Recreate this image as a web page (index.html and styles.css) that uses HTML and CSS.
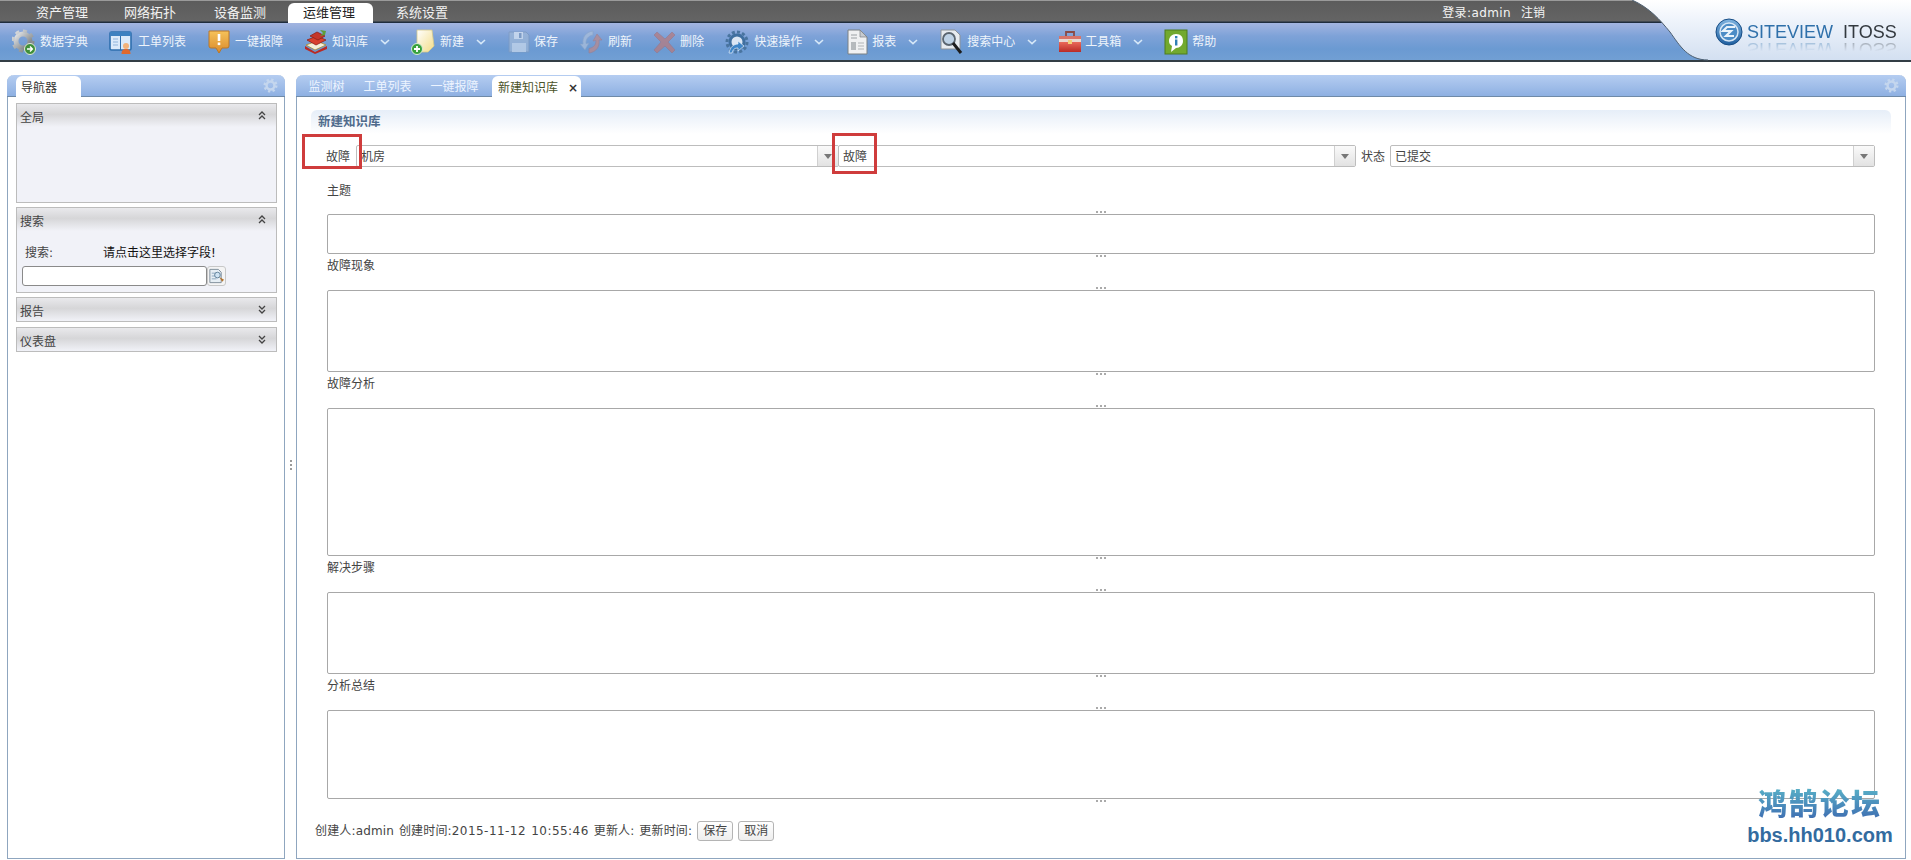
FILE: index.html
```html
<!DOCTYPE html>
<html lang="zh-CN">
<head>
<meta charset="utf-8">
<title>新建知识库</title>
<link rel="stylesheet" href="styles.css">
</head>
<body>
<svg class="defs" width="0" height="0" aria-hidden="true">
  <defs>
    <linearGradient id="gSteel" x1="0" y1="0" x2="1" y2="1"><stop offset="0" stop-color="#e2e4e6"/><stop offset="1" stop-color="#6e7478"/></linearGradient>
    <linearGradient id="gOrange" x1="0" y1="0" x2="0" y2="1"><stop offset="0" stop-color="#f6c25a"/><stop offset="1" stop-color="#d98a2a"/></linearGradient>
    <linearGradient id="gNote" x1="0" y1="0" x2="1" y2="1"><stop offset="0" stop-color="#fff"/><stop offset="1" stop-color="#f3dc86"/></linearGradient>
    <linearGradient id="gRed" x1="0" y1="0" x2="0" y2="1"><stop offset="0" stop-color="#ea6a5a"/><stop offset="1" stop-color="#b92a25"/></linearGradient>
    <linearGradient id="gLogo" x1="0" y1="0" x2="0" y2="1"><stop offset="0" stop-color="#ffffff"/><stop offset=".35" stop-color="#eef3fb"/><stop offset="1" stop-color="#d3e0f1"/></linearGradient>
    <linearGradient id="gBall" x1="0" y1="0" x2="0" y2="1"><stop offset="0" stop-color="#7fb4e0"/><stop offset="1" stop-color="#1f5f9f"/></linearGradient>
    <symbol id="gear" viewBox="0 0 16 16">
      <circle cx="8" cy="8" r="4.2" fill="none" stroke="currentColor" stroke-width="2.6"/>
      <circle cx="8" cy="8" r="6.2" fill="none" stroke="currentColor" stroke-width="2.6" stroke-dasharray="2.4 2.47"/>
    </symbol>
    <symbol id="chev" viewBox="0 0 10 6"><path d="M1 1l4 3.6L9 1" fill="none" stroke="#d6e8f8" stroke-width="1.6"/></symbol>
    <symbol id="up2" viewBox="0 0 8 9"><path d="M1 4l3-3 3 3M1 8l3-3 3 3" fill="none" stroke="#444" stroke-width="1.3"/></symbol>
    <symbol id="down2" viewBox="0 0 8 9"><path d="M1 1l3 3 3-3M1 5l3 3 3-3" fill="none" stroke="#444" stroke-width="1.3"/></symbol>
  </defs>
</svg>

<header class="app-header">
  <div class="topbar">
    <nav class="nav">
      <a class="nav-item">资产管理</a>
      <a class="nav-item">网络拓扑</a>
      <a class="nav-item nav-third">设备监测</a>
      <a class="nav-item nav-active">运维管理</a>
      <a class="nav-item nav-last">系统设置</a>
    </nav>
    <div class="userbar"><span class="user-name">登录:admin</span><span>注销</span></div>
  </div>
  <div class="toolbar">
    <div class="tool"><svg class="ti s28" viewBox="0 0 24 26"><circle cx="11" cy="12" r="7" fill="none" stroke="url(#gSteel)" stroke-width="5"/><circle cx="11" cy="12" r="10" fill="none" stroke="url(#gSteel)" stroke-width="3" stroke-dasharray="4 3.8"/><circle cx="18" cy="20" r="5.5" fill="#3f8f3a" stroke="#dfe9d8"/><path d="M15 20h5m-2-2.4 2.4 2.4-2.4 2.4" fill="none" stroke="#fff" stroke-width="1.4"/></svg><span>数据字典</span></div>
    <div class="tool"><svg class="ti s29" viewBox="0 0 24 26"><rect x="1" y="3" width="21" height="18" rx="1.5" fill="#dceafa" stroke="#2f6fae" stroke-width="1.6"/><rect x="1" y="3" width="21" height="4" fill="#3d80c0"/><path d="M11.5 7v14" stroke="#2f6fae"/><path d="M4 10h5M4 13h5M4 16h5" stroke="#a9c6e6" stroke-width="1.4"/><circle cx="17" cy="17" r="3" fill="#f3b27a"/><path d="M12.5 25c0-4 2-5 4.500-5s4.500 1 4.500 5z" fill="#e0682c"/></svg><span>工单列表</span></div>
    <div class="tool"><svg class="ti s28" viewBox="0 0 24 26"><path d="M2 2h20v15a2 2 0 0 1-2 2h-5l-3 5-3-5H4a2 2 0 0 1-2-2z" fill="url(#gOrange)" stroke="#b9772a"/><rect x="10.700" y="5" width="2.600" height="7" fill="#fff"/><rect x="10.700" y="13.500" width="2.600" height="2.600" fill="#fff"/></svg><span>一键报障</span></div>
    <div class="tool"><svg class="ti s28" viewBox="0 0 24 26"><path d="M1 17l10 6 12-6v3l-12 5-10-5z" fill="#b92a25"/><path d="M2 16l9 5 11-5-9-4z" fill="#f4efd9" stroke="#a9862f" stroke-width=".8"/><path d="M3 11l9 5 10-5-9-4z" fill="#d8402e" stroke="#8e2019" stroke-width=".8"/><path d="M6 7l8 4 7-4-8-4z" fill="#c5352a" stroke="#8e2019" stroke-width=".8"/><path d="M16 1l3 3-3 3 5-1 1-4z" fill="#5e9e3a"/></svg><span>知识库</span><svg class="chev"><use href="#chev"/></svg></div>
    <div class="tool"><svg class="ti s29" viewBox="0 0 24 26"><path d="M6 1h15l2 16-6 6H6z" fill="url(#gNote)" stroke="#d6c98a" stroke-width=".8"/><circle cx="6" cy="20" r="5.500" fill="#37a13c" stroke="#d9edd5"/><path d="M6 17v6M3 20h6" stroke="#fff" stroke-width="1.800"/></svg><span>新建</span><svg class="chev"><use href="#chev"/></svg></div>
    <div class="tool"><svg class="ti s27 off" viewBox="0 0 24 26"><path d="M2 3h17l3 3v17H2z" fill="#9db7d8" stroke="#7c99c0"/><rect x="7" y="3" width="9" height="7" fill="#d8e4f3"/><rect x="12" y="4" width="2.500" height="5" fill="#7c99c0"/><rect x="5" y="14" width="14" height="9" fill="#c8d8ec"/></svg><span>保存</span></div>
    <div class="tool"><svg class="ti s29 off" viewBox="0 0 24 26"><path d="M14 2C7 3 3 8 4 15l-3 0 5 6 4-7-3 .5C7 10 9 7 14 6z" fill="#a9bedb" stroke="#8aa3c6" stroke-width=".7"/><path d="M10 24c7-1 11-6 10-13l3 0-5-6-4 7 3-.5c0 4-2 7-7 8z" fill="#b98a8e" stroke="#a17a86" stroke-width=".7"/></svg><span>刷新</span></div>
    <div class="tool"><svg class="ti s27 off" viewBox="0 0 24 26"><path d="M4 3l8 7 7-7 3 3-7 7 7 8-3 3-7-7-8 7-3-3 7-8-7-7z" fill="#b57b80" stroke="#9b7080" stroke-width=".7"/></svg><span>删除</span></div>
    <div class="tool"><svg class="ti s29" viewBox="0 0 24 26"><circle cx="12" cy="13" r="7" fill="#dbe6f3" stroke="#3f6f9f" stroke-width="3"/><circle cx="12" cy="13" r="10" fill="none" stroke="#49749f" stroke-width="3" stroke-dasharray="3 2.200"/><path d="M4 24c1-6 5-9 9-9V12l6 5-6 5v-3c-3 0-5 1-6 5z" fill="#3f86c8" stroke="#e4eef8" stroke-width=".7"/></svg><span>快速操作</span><svg class="chev"><use href="#chev"/></svg></div>
    <div class="tool"><svg class="ti s27" viewBox="0 0 24 26"><path d="M3 1h12l7 7v17H3z" fill="#f0f1f2" stroke="#7b8084"/><path d="M15 1v7h7z" fill="#c7cbcf" stroke="#7b8084" stroke-width=".7"/><path d="M6 6h6M6 9h6" stroke="#9ba0a4"/><rect x="6" y="13" width="5" height="8" fill="#b6babd"/><path d="M13 14h6M13 17h6M13 20h6" stroke="#b0b4b7"/></svg><span>报表</span><svg class="chev"><use href="#chev"/></svg></div>
    <div class="tool"><svg class="ti s28" viewBox="0 0 24 26"><path d="M2 1h14l5 5v14H2z" fill="#e8ecf0" stroke="#8d9398"/><circle cx="10" cy="10" r="6" fill="#bfd3e6" stroke="#5b6670" stroke-width="1.800"/><path d="M14 14l8 10" stroke="#1d1d1d" stroke-width="3"/></svg><span>搜索中心</span><svg class="chev"><use href="#chev"/></svg></div>
    <div class="tool"><svg class="ti s27" viewBox="0 0 24 26"><path d="M8 7V3h8v4" fill="none" stroke="#8a4a45" stroke-width="1.800"/><rect x="1" y="7" width="22" height="8" fill="#ead9d2"/><rect x="1" y="13" width="22" height="10" fill="url(#gRed)"/><rect x="1" y="7" width="22" height="3" fill="#d7746a"/><rect x="10" y="11" width="4" height="4" fill="#f1d27a"/></svg><span>工具箱</span><svg class="chev"><use href="#chev"/></svg></div>
    <div class="tool"><svg class="ti s28" viewBox="0 0 24 26"><rect x="1" y="1" width="22" height="24" fill="#72a92f" stroke="#4d7d1e"/><path d="M12 5c5 0 7 3 7 7s-3 7-7 7l-5 4 1-6c-2-1-3-3-3-5 0-4 3-7 7-7z" fill="#fff"/><rect x="11" y="7" width="2.400" height="2.400" fill="#2f7fb5"/><rect x="11" y="10.500" width="2.400" height="6" fill="#2f7fb5"/></svg><span>帮助</span></div>
  </div>
  <div class="brand">
    <svg class="brand-bg" viewBox="0 0 280 62" width="280" height="62"><path d="M1 0C19 8 29 20 39 32 49 46 57 60 77 60H280V0z" fill="url(#gLogo)"/><path d="M1 0C19 8 29 20 39 32 49 46 57 60 77 60" fill="none" stroke="#4d5f70" stroke-width="1"/></svg>
    <svg class="brand-mark" viewBox="0 0 28 28" width="28" height="28"><circle cx="14" cy="14" r="13" fill="url(#gBall)" stroke="#174d86"/><circle cx="14" cy="14" r="9" fill="#4b8cc6" stroke="#d6e6f5" stroke-width="1.500"/><path d="M20 9h-8l-4 4h8l-5 5h8" fill="none" stroke="#e9f3fb" stroke-width="2.200"/></svg>
    <div class="brand-text"><span class="brand-a">SITEVIEW</span><span class="brand-b">ITOSS</span></div>
  </div>
</header>

<main class="workspace">
  <aside class="panel panel-nav">
    <div class="panel-head">
      <div class="ptab ptab-active ptab-nav">导航器</div>
      <svg class="pgear"><use href="#gear"/></svg>
    </div>
    <div class="accordion">
      <section class="acc acc-global"><h3 class="acc-head">全局<svg class="acc-ic"><use href="#up2"/></svg></h3></section>
      <section class="acc acc-search">
        <h3 class="acc-head">搜索<svg class="acc-ic"><use href="#up2"/></svg></h3>
        <div class="search-body">
          <div class="search-row"><span class="search-label">搜索:</span><span class="search-hint">请点击这里选择字段!</span></div>
          <div class="search-input">
            <input class="sinput" type="text">
            <button class="sbtn" type="button" aria-label="选择字段"><svg viewBox="0 0 18 18" width="18" height="18"><path d="M2 2h9l3 3v11H2z" fill="#e6eef4" stroke="#7d8c99"/><path d="M4 6h5M4 9h4M4 12h5" stroke="#8ba7bf"/><circle cx="10" cy="8" r="3" fill="#cfe3f2" stroke="#5d7f99"/><path d="M12 10l5 3-2 2z" fill="#b3732d"/></svg></button>
          </div>
        </div>
      </section>
      <section class="acc"><h3 class="acc-head">报告<svg class="acc-ic"><use href="#down2"/></svg></h3></section>
      <section class="acc acc-last"><h3 class="acc-head">仪表盘<svg class="acc-ic"><use href="#down2"/></svg></h3></section>
    </div>
  </aside>

  <div class="splitter"><i></i><i></i><i></i></div>

  <section class="panel panel-main">
    <div class="panel-head">
      <div class="ptab">监测树</div>
      <div class="ptab">工单列表</div>
      <div class="ptab">一键报障</div>
      <div class="ptab ptab-active ptab-new">新建知识库<span class="ptab-x">×</span></div>
      <svg class="pgear"><use href="#gear"/></svg>
    </div>
    <form class="form">
      <h2 class="form-title">新建知识库</h2>
      <div class="combo-row">
        <label class="lbl">故障</label>
        <div class="combo combo-a"><span class="combo-v">机房</span><span class="trigger"></span></div>
        <div class="combo combo-b"><span class="combo-v">故障</span><span class="trigger"></span></div>
        <label class="lbl lbl-state">状态</label>
        <div class="combo combo-c"><span class="combo-v">已提交</span><span class="trigger"></span></div>
      </div>
      <div class="field field-1"><label class="flabel">主题</label><div class="tawrap"><textarea class="ta h40"></textarea></div></div>
      <div class="field"><label class="flabel">故障现象</label><div class="tawrap"><textarea class="ta h82"></textarea></div></div>
      <div class="field"><label class="flabel">故障分析</label><div class="tawrap"><textarea class="ta h148"></textarea></div></div>
      <div class="field"><label class="flabel">解决步骤</label><div class="tawrap"><textarea class="ta h82"></textarea></div></div>
      <div class="field"><label class="flabel">分析总结</label><div class="tawrap"><textarea class="ta h89"></textarea></div></div>
      <div class="form-foot">
        <span class="foot-text">创建人:admin 创建时间:<span class="stamp">2015-11-12 10:55:46</span> 更新人: 更新时间:</span>
        <button class="btn" type="button">保存</button>
        <button class="btn" type="button">取消</button>
      </div>
    </form>
    <div class="mark mark-a"></div>
    <div class="mark mark-b"></div>
  </section>
</main>

<div class="watermark">
  <div class="wm-cn">鸿鹄论坛</div>
  <div class="wm-en">bbs.hh010.com</div>
</div>
</body>
</html>
```

FILE: styles.css
```css
* { box-sizing: border-box; }
html, body { margin: 0; padding: 0; width: 1911px; height: 860px; overflow: hidden; background: #fff; }
body { font: 12px/16px "DejaVu Sans", "Noto Sans CJK SC", sans-serif; color: #444; position: relative; }
.defs { position: absolute; }

/* header */
.app-header { position: relative; height: 62px; }
.topbar { height: 23px; display: flex; justify-content: space-between; background: linear-gradient(#9a9a9a 0, #9a9a9a 1px, #5c5c5c 1px, #646464 21px, #1f2d3d 22px); }
.nav { display: flex; padding-left: 18px; padding-top: 3px; }
.nav-item { font-size: 13px; line-height: 19px; padding: 0 18px; color: #f2f2f2; }
.nav-third { margin-left: 2px; }
.nav-active { margin-left: 4px; padding: 0 18px 0 15px; background: #fff; color: #222; border-radius: 6px 6px 0 0; height: 20px; }
.nav-last { margin-left: 5px; }
.userbar { display: flex; gap: 10px; padding: 5px 366px 0 0; line-height: 16px; color: #f4f4f4; }
.user-name { letter-spacing: .4px; }

.toolbar { height: 39px; padding-left: 12px; display: flex; align-items: center; gap: 21px; color: #eef4fb; background: linear-gradient(#a3b5e0 0, #7ea2d8 35%, #6b9ad2 70%, #719fd4 100%); border-bottom: 2px solid #333d45; }
.tool { display: flex; align-items: center; height: 26px; }
.ti { width: 24px; height: 26px; flex: none; }
.s27 { margin-right: 3px; }
.s28 { margin-right: 4px; }
.s29 { margin-right: 5px; }
.off { opacity: .75; }
.chev { width: 10px; height: 6px; margin-left: 12px; }

.brand { position: absolute; left: 1631px; top: 0; width: 280px; height: 62px; }
.brand-bg { position: absolute; left: 0; top: 0; }
.brand-mark { position: absolute; left: 84px; top: 18px; }
.brand-text { position: absolute; left: 116px; top: 20px; display: flex; gap: 10px; font: 18px/24px "Liberation Sans", Arial, sans-serif; }
.brand-a { color: #2f70aa; -webkit-box-reflect: below -7px linear-gradient(transparent 40%, rgba(255,255,255,.55)); }
.brand-b { color: #33393f; -webkit-box-reflect: below -7px linear-gradient(transparent 40%, rgba(255,255,255,.55)); }

/* workspace */
.workspace { display: flex; padding: 13px 5px 0 7px; height: 797px; }
.panel { background: #fff; border: 1px solid #8fa6bf; border-top: 0; border-radius: 7px 7px 0 0; position: relative; }
.panel-nav { width: 278px; flex: none; }
.panel-main { flex: 1; min-width: 0; }
.splitter { width: 11px; flex: none; display: flex; flex-direction: column; align-items: center; justify-content: center; gap: 2px; height: 780px; }
.splitter i { width: 2px; height: 2px; background: #9a9a9a; }

.panel-head { height: 22px; margin: 0 -1px; display: flex; align-items: flex-end; padding-left: 9px; border-radius: 7px 7px 0 0; background: linear-gradient(#b5cdf1, #8eb0e2); border-bottom: 1px solid #6f8aa8; position: relative; }
.ptab { height: 21px; line-height: 24px; padding: 0 9.500px; color: #edf4ff; white-space: nowrap; }
.panel-main .panel-head { padding-left: 3px; }
.ptab-active { background: #fff; color: #4a5228; border-radius: 6px 6px 0 0; }
.ptab-nav { padding: 0 9px 0 5px; width: 65px; color: #333; margin-bottom: -1px; height: 21px; }
.ptab-new { margin-left: 4px; padding: 0 0 0 6px; width: 89px; margin-bottom: -1px; }
.ptab-x { margin-left: 10px; font-weight: bold; color: #333; }
.pgear { position: absolute; right: 7px; top: 3px; width: 15px; height: 15px; color: #c4d6ee; }

/* accordion */
.accordion { padding: 6px 7px 0 8px; display: flex; flex-direction: column; gap: 4px; }
.acc { border: 1px solid #bcbcbc; background: #f1f2f8; }
.acc-head { margin: 0; height: 23px; padding: 4px 0 0 3px; display: flex; align-items: center; justify-content: space-between; font-size: 12px; font-weight: normal; color: #444; background: linear-gradient(#e9e9ec, #d6d6d8 45%, #f1f2f8); }
.acc-ic { width: 8px; height: 9px; margin: -4px 10px 0 0; }
.acc-global { height: 100px; }
.acc-search { height: 86px; }
.acc-last { margin-top: 1px; }
.search-body { padding: 14px 0 0 5px; }
.search-row { display: flex; height: 16px; padding-left: 3px; }
.search-label { width: 78px; }
.search-hint { color: #111; }
.search-input { display: flex; margin-top: 5px; }
.sinput { width: 185px; height: 20px; padding: 0 3px; border: 1px solid #8a8a8a; border-radius: 3px; background: #fff; }
.sbtn { width: 19px; height: 20px; padding: 0; border: 1px solid #c8c8c8; border-radius: 3px; background: #f4f4f4; display: flex; align-items: center; justify-content: center; }

/* form */
.form { padding: 13px 14px 0; }
.form-title { margin: 0; height: 24px; padding-left: 7px; font-size: 12.500px; line-height: 24px; font-weight: bold; color: #4f6b8c; border-radius: 6px 6px 0 0; background: linear-gradient(#e6eef8, #ffffff); }
.combo-row { margin-top: 11px; display: flex; align-items: center; padding-left: 15px; }
.lbl { width: 30px; flex: none; padding-top: 1px; }
.combo { height: 22px; display: flex; justify-content: space-between; border: 1px solid #bdbdbd; border-radius: 2px; background: #fff; }
.combo-a { width: 483px; }
.combo-b { width: 518px; margin-left: -1px; }
.combo-c { width: 485px; }
.lbl-state { margin-left: 5px; width: 29px; }
.combo-v { padding-left: 4px; line-height: 22px; color: #444; }
.trigger { width: 21px; background: linear-gradient(#fafafa, #e2e2e2); border-left: 1px solid #d0d0d0; position: relative; }
.trigger::after { content: ""; position: absolute; left: 6px; top: 8px; border: 4px solid transparent; border-top: 5px solid #777; border-bottom: 0; }

.field { padding-left: 16px; padding-right: 16px; }
.field-1 { margin-top: 12px; }
.flabel { display: block; height: 24px; line-height: 24px; margin-bottom: 12px; }
.field-1 .flabel { margin-bottom: 11px; }
.tawrap { position: relative; }
.tawrap::before, .tawrap::after { content: ""; position: absolute; left: 769px; width: 10px; height: 2px; background: repeating-linear-gradient(90deg, #aaa 0 2px, transparent 2px 4px); }
.tawrap::before { top: -3px; }
.tawrap::after { bottom: -3px; }
.ta { display: block; width: 100%; margin: 0; padding: 2px 4px; resize: none; border: 1px solid #a8a8a8; border-radius: 2px; background: #fff; }
.h40 { height: 40px; }
.h82 { height: 82px; }
.h148 { height: 148px; }
.h89 { height: 89px; }

.form-foot { margin-top: 22px; padding-left: 4px; display: flex; align-items: center; gap: 5px; height: 20px; color: #444; }
.foot-text { letter-spacing: .15px; word-spacing: 1px; }
.stamp { letter-spacing: .45px; }
.btn { width: 36px; height: 20px; padding: 0; font: 12px/16px "DejaVu Sans", "Noto Sans CJK SC", sans-serif; color: #444; border: 1px solid #b4b4b4; border-radius: 3px; background: linear-gradient(#fff, #eee); }

.mark { position: absolute; border: 3px solid #cf3c3c; pointer-events: none; }
.mark-a { left: 5px; top: 59px; width: 60px; height: 35px; }
.mark-b { left: 535px; top: 58px; width: 45px; height: 41px; }

/* watermark */
.watermark { position: absolute; left: 1745px; top: 785px; width: 150px; text-align: center; font-family: "Liberation Sans", "Noto Sans CJK SC", sans-serif; font-weight: bold; }
.wm-cn { font-family: "Noto Sans CJK SC", sans-serif; font-weight: 900; font-size: 29px; letter-spacing: 2px; line-height: 34px; background: linear-gradient(#5bb6c9, #3f6fb2); -webkit-background-clip: text; background-clip: text; color: transparent; }
.wm-en { font-size: 20px; line-height: 26px; margin-top: 3px; color: #336b9f; white-space: nowrap; }
```
